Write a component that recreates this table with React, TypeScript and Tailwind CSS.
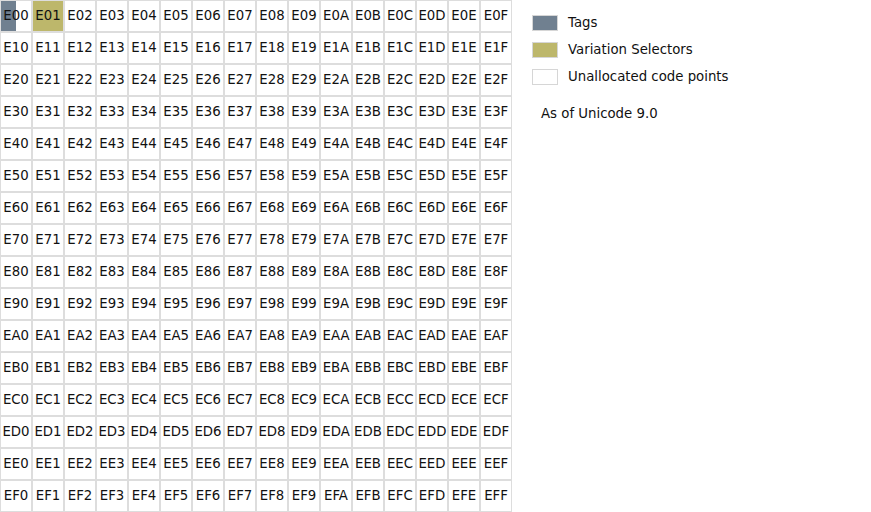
const HEX = '0123456789ABCDEF'.split('');

function Cell({ code }: { code: string }) {
  const isTags = code === 'E00';
  const isVs = code === 'E01';
  return (
    <div
      className={`relative flex h-[32px] w-[32px] items-center justify-center border border-[#dddddd] ${
        isVs ? 'bg-[#bdb76b]' : 'bg-white'
      }`}
    >
      {isTags ? <div className="absolute inset-y-0 left-0 w-[15px] bg-[#708090]" /> : null}
      <span className="relative">{code}</span>
    </div>
  );
}

function Legend() {
  const items = [
    { label: 'Tags', swatch: 'bg-[#708090]' },
    { label: 'Variation Selectors', swatch: 'bg-[#bdb76b]' },
    { label: 'Unallocated code points', swatch: 'bg-white' },
  ];
  return (
    <div className="pl-[20px] pt-[15px]">
      <div className="flex flex-col gap-[11px]">
        {items.map((it) => (
          <div key={it.label} className="flex items-center gap-[10px]">
            <div className={`h-[16px] w-[26px] border border-[#d6d6d6] ${it.swatch}`} />
            <span>{it.label}</span>
          </div>
        ))}
      </div>
      <p className="mt-[22px] pl-[9px]">As of Unicode 9.0</p>
    </div>
  );
}

export default function App() {
  return (
    <div
      className="flex h-[512px] w-[871px] bg-white text-[13.3px] leading-none text-[#111]"
      style={{ fontFamily: '"DejaVu Sans", sans-serif' }}
    >
      <div className="grid w-[512px] grid-cols-[repeat(16,32px)]">
        {HEX.map((r) => HEX.map((c) => <Cell key={r + c} code={`E${r}${c}`} />))}
      </div>
      <Legend />
    </div>
  );
}
